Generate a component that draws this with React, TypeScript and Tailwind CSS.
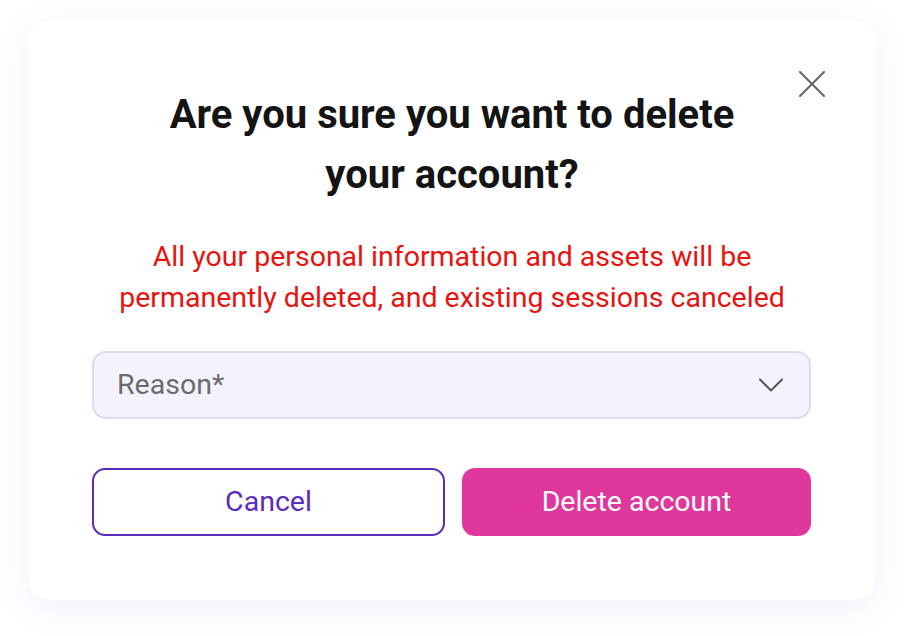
import React from 'react';

const App: React.FC = () => {
  return (
    <div className="min-h-screen w-full bg-white pt-[20px] pl-[28px]" style={{ fontFamily: 'Roboto, "Noto Sans", sans-serif' }}>
      <div className="relative w-[848px] h-[580px] rounded-[22px] bg-white shadow-[0_8px_36px_rgba(90,70,200,0.09)] px-[64px] pt-[65px] pb-[65px]">
        <button className="absolute top-[51px] right-[51px] text-[#666666]" aria-label="Close">
          <svg width="26" height="26" viewBox="0 0 26 26" fill="none" stroke="currentColor" strokeWidth="2" strokeLinecap="round">
            <path d="M1 1 L25 25 M25 1 L1 25" />
          </svg>
        </button>

        <h1 className="mx-auto max-w-[600px] text-center text-[40px] leading-[60px] font-bold text-[#141414]">
          Are you sure you want to delete your account?
        </h1>

        <p className="mt-[31px] text-center text-[28.5px] leading-[41px] text-[#e8130f]">
          All your personal information and assets will be
          <br />
          permanently deleted, and existing sessions canceled
        </p>

        <div className="mt-[33px] flex h-[68px] w-[719px] items-center justify-between rounded-[14px] border-2 border-[#dedaf0] bg-[#f4f2fe] pl-[23px] pr-[26px]">
          <span className="text-[28.5px] text-[#6b6b6b]">Reason*</span>
          <svg width="24" height="14" viewBox="0 0 24 14" fill="none" stroke="#555555" strokeWidth="2" strokeLinecap="round" strokeLinejoin="round">
            <path d="M1 1.5 L12 12.5 L23 1.5" />
          </svg>
        </div>

        <div className="mt-[49px] flex w-[719px] gap-[17px]">
          <button className="flex h-[68px] flex-1 items-center justify-center rounded-[13px] border-2 border-[#5a2bbf] bg-white text-[28.5px] text-[#5a2bbf]">
            Cancel
          </button>
          <button className="flex h-[68px] flex-1 items-center justify-center rounded-[13px] bg-[#e0379d] text-[28.5px] text-white">
            Delete account
          </button>
        </div>
      </div>
    </div>
  );
};

export default App;
